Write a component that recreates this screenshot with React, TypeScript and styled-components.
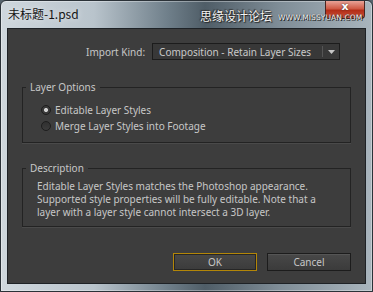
import * as React from 'react'
import styled, {createGlobalStyle} from 'styled-components'

const Global = createGlobalStyle`
  html, body { margin: 0; padding: 0; background: #56636d; }
  body { font-family: 'Noto Sans', 'Noto Sans CJK SC', sans-serif; }
`

export default function App () {
  return (
    <>
      <Global/>
      <Window>
        <TitleBar>
          <Title>未标题-1.psd</Title>
          <Watermark>
            <span className='cn'>思缘设计论坛</span>
            <span className='url'>WWW.MISSYUAN.COM</span>
          </Watermark>
          <CloseButton>x</CloseButton>
        </TitleBar>
        <Content>
          <ImportRow>
            <Label>Import Kind:</Label>
            <Select>
              <span className='value'>Composition - Retain Layer Sizes</span>
              <span className='arrow'>
                <svg width='7' height='4' viewBox='0 0 7 4'><path d='M0 0h7L3.5 4z' fill='#c6c6c6'/></svg>
              </span>
            </Select>
          </ImportRow>
          <Group height={62} top={21}>
            <legend>Layer Options</legend>
            <RadioList>
              <Radio checked={true}><i/>Editable Layer Styles</Radio>
              <Radio checked={false}><i/>Merge Layer Styles into Footage</Radio>
            </RadioList>
          </Group>
          <Group height={65} top={19}>
            <legend>Description</legend>
            <Description>
              Editable Layer Styles matches the Photoshop appearance.<br/>
              Supported style properties will be fully editable. Note that a<br/>
              layer with a layer style cannot intersect a 3D layer.
            </Description>
          </Group>
          <Buttons>
            <Button primary>OK</Button>
            <Button>Cancel</Button>
          </Buttons>
        </Content>
      </Window>
    </>
  )
}

const Window = styled.div`
  width: 373px;
  height: 292px;
  box-sizing: border-box;
  padding: 0 6px 7px 6px;
  display: flex;
  flex-direction: column;
  border-radius: 6px 6px 0 0;
  border: 1px solid #2b3238;
  background:
    linear-gradient(90deg, #cfd7dd 0%, #b9c4cc 25%, #6f7f8a 45%, #4f5d67 55%, #7f8d97 75%, #a9b5bd 100%);
  box-shadow: inset 0 0 0 1px rgba(255,255,255,0.35);
`

const TitleBar = styled.div`
  position: relative;
  height: 27px;
  display: flex;
  align-items: flex-start;
  margin: 0 -6px;
`

const Title = styled.div`
  margin: 6px 0 0 7px;
  font-family: 'Noto Sans CJK SC', 'Noto Sans', sans-serif;
  font-size: 12px;
  line-height: 14px;
  color: #141414;
  text-shadow: 0 0 6px rgba(255,255,255,0.7);
`

const Watermark = styled.div`
  position: absolute;
  left: 199px;
  top: 7px;
  display: flex;
  align-items: center;
  gap: 6px;
  white-space: nowrap;
  color: #f4f4f4;
  pointer-events: none;
  z-index: 2;

  > .cn {
    font-family: 'Noto Sans CJK SC', sans-serif;
    font-size: 12px;
    line-height: 15px;
    text-shadow: 0 0 1px #222, 1px 1px 1px #222, -1px -1px 1px #333;
  }
  > .url {
    font-family: 'DejaVu Sans', sans-serif;
    font-size: 7.5px;
    letter-spacing: 0.1px;
    text-shadow: 0 0 1px #222, 1px 1px 0 #222;
    margin-top: 4px;
  }
`

const CloseButton = styled.div`
  margin-left: auto;
  margin-right: 7px;
  width: 40px;
  height: 18px;
  box-sizing: border-box;
  border: 1px solid #4a2520;
  border-top: none;
  border-radius: 0 0 4px 4px;
  background: linear-gradient(180deg, #e8a397 0%, #cf5a45 45%, #b42e18 55%, #c9503a 100%);
  color: #fff;
  font-family: 'DejaVu Sans', sans-serif;
  font-weight: bold;
  font-size: 11px;
  line-height: 12px;
  text-align: center;
  text-shadow: 0 0 2px #333;
`

const Content = styled.div`
  flex: 1;
  background: #3d3d3d;
  border: 1px solid #1e2226;
  padding: 0 14px 0 14px;
  display: flex;
  flex-direction: column;
  color: #c7c7c7;
  font-family: 'Noto Sans', sans-serif;
  font-size: 10px;
`

const ImportRow = styled.div`
  display: flex;
  align-items: center;
  margin: 14px 0 0 64px;
  gap: 7px;
`

const Label = styled.div`
  font-size: 10px;
  color: #c7c7c7;
`

const Select = styled.div`
  width: 188px;
  height: 17px;
  box-sizing: border-box;
  border: 1px solid #1c1c1c;
  background: #383838;
  display: flex;
  align-items: center;

  > .value {
    flex: 1;
    padding-left: 6px;
    white-space: nowrap;
    font-size: 10px;
    color: #c9c9c9;
  }
  > .arrow {
    width: 16px;
    height: 11px;
    border-left: 1px solid #555;
    display: flex;
    align-items: center;
    justify-content: center;
  }
`

const Group = styled.fieldset<{height:number, top:number}>`
  margin: ${p => p.top}px 0 0 0;
  padding: 0;
  height: ${p => p.height}px;
  box-sizing: border-box;
  border: 1px solid #232323;
  box-shadow: 0 1px 0 #4a4a4a;
  min-width: 0;

  > legend {
    margin-left: 3px;
    padding: 0 4px;
    font-size: 10px;
    line-height: 13px;
    color: #c7c7c7;
  }
`

const RadioList = styled.div`
  display: flex;
  flex-direction: column;
  gap: 3px;
  margin-top: 9px;
  padding-left: 18px;
`

const Radio = styled.label<{checked:boolean}>`
  display: flex;
  align-items: center;
  gap: 4px;
  height: 13px;
  font-size: 10px;

  > i {
    width: 10px;
    height: 10px;
    border-radius: 50%;
    box-sizing: border-box;
    border: 1px solid #1d1d1d;
    background: ${p => p.checked
      ? 'radial-gradient(circle, #d0d0d0 0 1.6px, #3a3a3a 2.4px)'
      : 'linear-gradient(#303030, #3c3c3c)'};
  }
`

const Description = styled.div`
  margin: 5px 0 0 0;
  padding-left: 14px;
  font-size: 10px;
  line-height: 13px;
  color: #c7c7c7;
`

const Buttons = styled.div`
  display: flex;
  justify-content: flex-end;
  gap: 10px;
  margin-top: 26px;
`

const Button = styled.div<{primary?:boolean}>`
  width: 84px;
  height: 18px;
  box-sizing: border-box;
  border: 1px solid ${p => p.primary ? '#b38608' : '#1c1c1c'};
  background: linear-gradient(#484848, #3b3b3b);
  box-shadow: ${p => p.primary ? 'inset 0 0 0 1px #262626' : 'inset 0 1px 0 #555'};
  font-size: 10px;
  line-height: 16px;
  text-align: center;
  color: #c7c7c7;
`
